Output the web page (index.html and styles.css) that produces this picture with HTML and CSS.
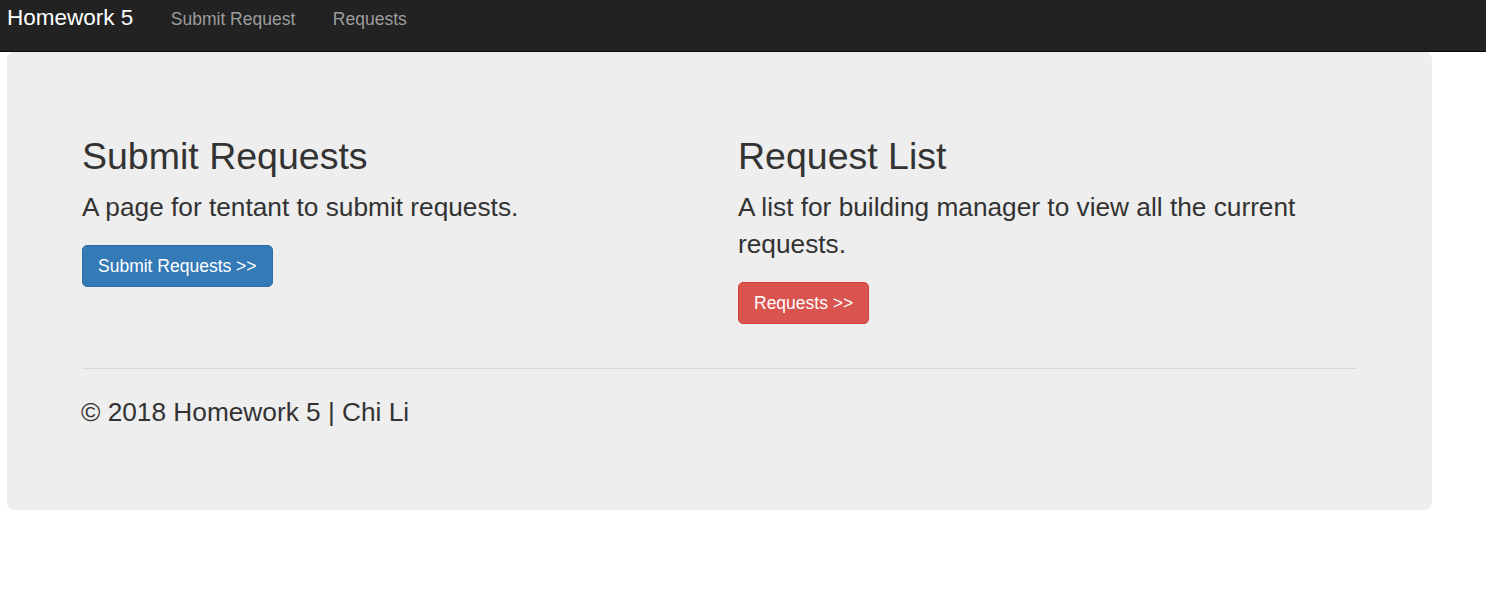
FILE: index.html
```html
<!DOCTYPE html>
<html lang="en">
<head>
<meta charset="utf-8">
<title>Homework 5</title>
<link rel="stylesheet" href="styles.css">
</head>
<body>
<nav class="navbar">
  <a class="brand" href="#">Homework 5</a>
  <a class="nav-link" href="#">Submit Request</a>
  <a class="nav-link" href="#">Requests</a>
</nav>
<main class="jumbotron">
  <div class="row">
    <section class="col">
      <h2 class="title">Submit Requests</h2>
      <p class="lead">A page for tentant to submit requests.</p>
      <p class="actions"><a class="btn btn-primary" href="#">Submit Requests &gt;&gt;</a></p>
    </section>
    <section class="col">
      <h2 class="title">Request List</h2>
      <p class="lead">A list for building manager to view all the current requests.</p>
      <p class="actions"><a class="btn btn-danger" href="#">Requests &gt;&gt;</a></p>
    </section>
  </div>
  <hr class="divider">
  <footer class="footer">
    <p class="footnote">&copy; 2018 Homework 5 | Chi Li</p>
  </footer>
</main>
</body>
</html>
```

FILE: styles.css
```css
html, body {
  margin: 0;
  padding: 0;
  background: #fff;
}

body {
  font-family: "Liberation Sans", Arial, sans-serif;
  font-size: 17.5px;
  color: #333;
}

.navbar {
  display: flex;
  align-items: baseline;
  box-sizing: border-box;
  height: 52px;
  padding-top: 5px;
  background: #222;
  border-bottom: 1px solid #080808;
}

.brand {
  font-size: 22.5px;
  line-height: 25px;
  color: #fff;
  text-decoration: none;
  padding: 0 18.75px 0 7px;
}

.nav-link {
  font-size: 17.5px;
  line-height: 25px;
  color: #9d9d9d;
  text-decoration: none;
  padding: 0 18.75px;
}

.jumbotron {
  display: block;
  box-sizing: border-box;
  width: 1425px;
  margin: 0 0 0 7px;
  padding: 60px 75px 61px;
  background: #eee;
  border-radius: 7.5px;
}

.row {
  display: grid;
  grid-template-columns: 1fr 1fr;
  column-gap: 37px;
}

.title {
  font-size: 37.5px;
  font-weight: 500;
  line-height: 41.25px;
  margin: 24px 0 11.5px;
  color: #333;
}

.lead {
  font-size: 26.25px;
  line-height: 36.75px;
  margin: 0 0 19.75px;
}

.actions {
  margin: 0 0 18.75px;
  line-height: 0;
}

.btn {
  display: inline-block;
  font-size: 17.5px;
  line-height: 25px;
  padding: 7.5px 15px;
  border: 1px solid transparent;
  border-radius: 5px;
  color: #fff;
  text-decoration: none;
}

.btn-primary {
  background: #337ab7;
  border-color: #2e6da4;
}

.btn-danger {
  background: #d9534f;
  border-color: #d43f3a;
}

.divider {
  margin: 25px 0;
  border: 0;
  border-top: 1px solid #d9d9d9;
  height: 0;
}

.footnote {
  font-size: 26.25px;
  line-height: 36.75px;
  margin: 0 0 18.75px -1px;
}
```
